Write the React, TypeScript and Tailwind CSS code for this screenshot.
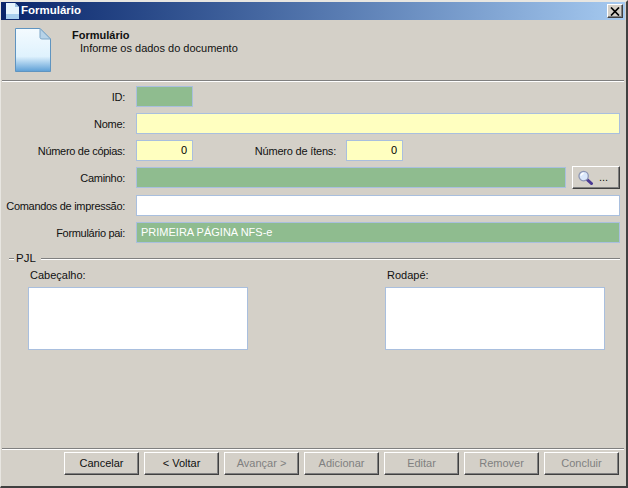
const bevel =
  'border border-t-white border-l-white border-r-[#404040] border-b-[#404040] shadow-[inset_-1px_-1px_0_#808080]';

function Etched({ className = '' }: { className?: string }) {
  return (
    <div className={`h-[2px] border-t border-t-[#808080] border-b border-b-white ${className}`} />
  );
}

function Field({ color, width, children, right }: { color: string; width: string; children?: string; right?: boolean }) {
  return (
    <div
      className={`h-[21px] border border-[#a9bfde] flex items-center px-[4px] ${color} ${width} ${
        right ? 'justify-end pr-[5px]' : ''
      }`}
    >
      {children}
    </div>
  );
}

function Row({ label, children, className = '' }: { label: string; children: React.ReactNode; className?: string }) {
  return (
    <div className={`flex items-center h-[21px] ${className}`}>
      <div className="w-[124px] shrink-0 pt-[1px] text-right text-[#111] whitespace-nowrap tracking-[-0.3px]">
        {label}
      </div>
      <div className="ml-[11px] flex flex-1 items-center">{children}</div>
    </div>
  );
}

function FooterButton({ label, disabled }: { label: string; disabled?: boolean }) {
  return (
    <button
      type="button"
      className={`w-[75px] h-[23px] flex items-center justify-center ${bevel} ${
        disabled ? 'text-[#808080]' : 'text-[#101010]'
      }`}
    >
      {label}
    </button>
  );
}

function DocIcon() {
  return (
    <svg width="36" height="44" viewBox="0 0 36 44">
      <defs>
        <linearGradient id="page" x1="0" y1="0" x2="0" y2="1">
          <stop offset="0" stopColor="#f4fbff" />
          <stop offset="0.65" stopColor="#dff2fd" />
          <stop offset="1" stopColor="#5d9fd6" />
        </linearGradient>
      </defs>
      <path d="M.5.5H25L35.5 11V43.500H.5Z" fill="url(#page)" stroke="#5f94c0" />
      <path d="M25 .5V9.500Q25 11 27 11H35.500Z" fill="#b7d3e8" stroke="#7fa6c6" />
    </svg>
  );
}

function SmallDocIcon() {
  return (
    <svg width="13" height="16" viewBox="0 0 13 16">
      <path d="M0 0H9L13 4V16H0Z" fill="#e6f4fd" />
      <path d="M9 0V4H13Z" fill="#9cc3e4" />
      <path d="M0 11H13V16H0Z" fill="#a9cfee" />
    </svg>
  );
}

function Magnifier() {
  return (
    <svg width="17" height="15" viewBox="0 0 18 16">
      <path d="M10.500 10 L15.500 14.500" stroke="#4b3a94" strokeWidth="3" strokeLinecap="round" />
      <circle cx="7" cy="6.500" r="5" fill="#dbe8fb" stroke="#8d96b4" strokeWidth="1.400" />
      <path d="M4 6 Q4.500 4 7 3.500" stroke="#ffffff" strokeWidth="1.500" fill="none" />
    </svg>
  );
}

export default function App() {
  return (
    <div
      className="w-[628px] h-[488px] flex flex-col bg-[#d4d0c8] border-t-2 border-t-[#e8e6e1] border-l border-l-[#e8e6e1] border-r-2 border-r-[#404040] border-b-2 border-b-[#404040] text-[11px] leading-none overflow-hidden"
      style={{ fontFamily: '"Liberation Sans", Arial, sans-serif' }}
    >
      {/* title bar */}
      <div className="h-[18px] shrink-0 flex items-center bg-gradient-to-r from-[#0a246a] to-[#a6caf0] mr-[1px]">
        <div className="ml-[5px]">
          <SmallDocIcon />
        </div>
        <span className="ml-[2px] text-white font-bold text-[11.500px]">Formulário</span>
        <button
          type="button"
          className={`ml-auto mr-[2px] w-[16px] h-[14px] bg-[#d4d0c8] flex items-center justify-center ${bevel}`}
        >
          <svg width="10" height="9" viewBox="0 0 10 9">
            <path d="M1 .5L9 8.500M9 .5L1 8.500" stroke="#000" strokeWidth="1.700" />
          </svg>
        </button>
      </div>

      {/* header */}
      <div className="h-[60px] shrink-0 flex pl-[14px] pt-[8px]">
        <DocIcon />
        <div className="ml-[21px] pt-[2px]">
          <div className="font-bold text-[#101010] h-[13px]">Formulário</div>
          <div className="ml-[8px] text-[#111]">Informe os dados do documento</div>
        </div>
      </div>
      <Etched className="ml-[1px] mr-[2px] shrink-0" />

      {/* form */}
      <div className="pt-[4px] pr-[6px] flex flex-col gap-[6px] shrink-0">
        <Row label="ID:">
          <Field color="bg-[#8fbc8f]" width="w-[57px]" />
        </Row>
        <Row label="Nome:">
          <Field color="bg-[#ffffc0]" width="flex-1" />
        </Row>
        <Row label="Número de cópias:">
          <Field color="bg-[#ffffc0]" width="w-[57px]" right>
            0
          </Field>
          <span className="w-[143px] pt-[1px] text-right whitespace-nowrap text-[#111] tracking-[-0.2px]">
            Número de ítens:
          </span>
          <div className="ml-[10px]">
            <Field color="bg-[#ffffc0]" width="w-[57px]" right>
              0
            </Field>
          </div>
        </Row>
        <Row label="Caminho:">
          <Field color="bg-[#8fbc8f]" width="flex-1" />
          <button
            type="button"
            className={`ml-[6px] w-[48px] h-[23px] flex items-center pl-[4px] ${bevel} text-[#101010]`}
          >
            <Magnifier />
            <span className="ml-[5px]">...</span>
          </button>
        </Row>
        <Row label="Comandos de impressão:" className="mt-[1px]">
          <Field color="bg-white" width="flex-1" />
        </Row>
        <Row label="Formulário pai:">
          <Field color="bg-[#8fbc8f] text-white" width="flex-1">
            PRIMEIRA PÁGINA NFS-e
          </Field>
        </Row>
      </div>

      {/* PJL group */}
      <div className="mt-[9px] flex items-center h-[14px] shrink-0 pr-[6px]">
        <Etched className="ml-[8px] w-[5px]" />
        <span className="mx-[2px] text-[#111] text-[11.500px]">PJL</span>
        <Etched className="ml-[3px] flex-1" />
      </div>
      <div className="ml-[27px] mt-[4px] flex shrink-0">
        <div className="w-[357px]">
          <div className="ml-[2px] text-[#111] h-[13px]">Cabeçalho:</div>
          <div className="mt-[4px] w-[220px] h-[63px] bg-white border border-[#a9bfde]" />
        </div>
        <div>
          <div className="ml-[2px] text-[#111] h-[13px]">Rodapé:</div>
          <div className="mt-[4px] w-[220px] h-[63px] bg-white border border-[#a9bfde]" />
        </div>
      </div>

      {/* footer */}
      <Etched className="mt-auto ml-[1px] mr-[2px] shrink-0" />
      <div className="flex justify-end gap-[5px] pr-[7px] mt-[2px] mb-[11px] shrink-0">
        <FooterButton label="Cancelar" />
        <FooterButton label="< Voltar" />
        <FooterButton label="Avançar >" disabled />
        <FooterButton label="Adicionar" disabled />
        <FooterButton label="Editar" disabled />
        <FooterButton label="Remover" disabled />
        <FooterButton label="Concluir" disabled />
      </div>
    </div>
  );
}
